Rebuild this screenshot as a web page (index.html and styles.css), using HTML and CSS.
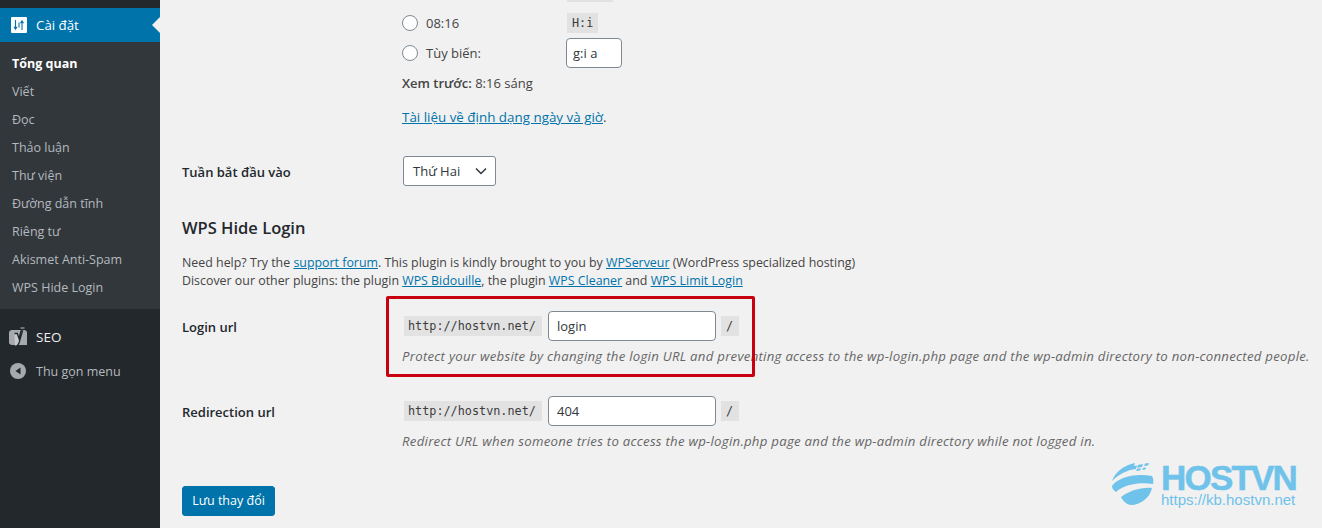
FILE: index.html
```html
<!DOCTYPE html>
<html lang="vi">
<head>
<meta charset="utf-8">
<title>Cài đặt</title>
<link rel="stylesheet" href="styles.css">
</head>
<body>
<div class="page">
  <nav class="sidebar">
    <div class="menu-current">
      <svg class="icon-settings" viewBox="0 0 16 16" width="16" height="16"><rect width="16" height="16" rx="1" fill="#fff"/><path d="M4.500 3v9M3 9.800l1.500 2.400 1.500-2.400M11 13V4M9.500 6.200L11 3.800l1.500 2.400M8 5.500v5" stroke="#0073aa" stroke-width="1.100" fill="none"/></svg>
      <span>Cài đặt</span>
    </div>
    <ul class="submenu">
      <li class="active">Tổng quan</li>
      <li>Viết</li>
      <li>Đọc</li>
      <li>Thảo luận</li>
      <li>Thư viện</li>
      <li>Đường dẫn tĩnh</li>
      <li>Riêng tư</li>
      <li>Akismet Anti-Spam</li>
      <li>WPS Hide Login</li>
    </ul>
    <div class="menu-seo">
      <svg class="icon-seo" viewBox="0 0 18 20" width="18" height="20"><path d="M3 3h12c1.500 0 3 1 3 2.500V18H3c-1.500 0-3-1-3-2.500v-10C0 4 1.500 3 3 3z" fill="#a7aaad"/><path d="M5.500 6.500h2.800l1.700 5 2-7.500h1.500L10 16c-.5 1.800-2 3.200-4 3.500" stroke="#23282d" stroke-width="1.300" fill="#c8cacc"/><path d="M11.500 1h4" stroke="#a7aaad" stroke-width="1.200"/></svg>
      <span>SEO</span>
    </div>
    <div class="menu-collapse">
      <svg class="icon-collapse" viewBox="0 0 16 16" width="16" height="16"><circle cx="8" cy="8" r="8" fill="#a7aaad"/><path d="M10.500 4.500v7L5.500 8z" fill="#23282d"/></svg>
      <span>Thu gọn menu</span>
    </div>
  </nav>

  <main class="content">
    <div class="row row-time">
      <div class="label"></div>
      <div class="field">
        <code class="fmt-clipped"></code>
        <div class="time-line">
          <label class="radio-label"><span class="radio"></span>08:16</label>
          <code class="fmt">H:i</code>
        </div>
        <div class="time-line custom-line">
          <label class="radio-label"><span class="radio"></span>Tùy biến:</label>
          <span class="input input-small">g:i a</span>
        </div>
        <p class="preview"><strong>Xem trước:</strong> 8:16 sáng</p>
        <p class="doc"><a href="#">Tài liệu về định dạng ngày và giờ</a>.</p>
      </div>
    </div>

    <div class="row row-week">
      <div class="label">Tuần bắt đầu vào</div>
      <div class="field">
        <div class="select">Thứ Hai
          <svg viewBox="0 0 12 8" width="12" height="8"><path d="M1 1.500l5 5 5-5" stroke="#32373c" stroke-width="1.500" fill="none"/></svg>
        </div>
      </div>
    </div>

    <h2 class="title">WPS Hide Login</h2>
    <p class="help">Need help? Try the <a href="#">support forum</a>. This plugin is kindly brought to you by <a href="#">WPServeur</a> (WordPress specialized hosting)<br>
    Discover our other plugins: the plugin <a href="#">WPS Bidouille</a>, the plugin <a href="#">WPS Cleaner</a> and <a href="#">WPS Limit Login</a></p>

    <div class="row row-url row-login">
      <div class="label">Login url</div>
      <div class="field">
        <div class="url-line">
          <code class="prefix">http://hostvn.net/</code>
          <span class="input input-url">login</span>
          <code class="slash">/</code>
        </div>
        <p class="desc">Protect your website by changing the login URL and preventing access to the wp-login.php page and the wp-admin directory to non-connected people.</p>
      </div>
      <div class="highlight"></div>
    </div>

    <div class="row row-url row-redirect">
      <div class="label">Redirection url</div>
      <div class="field">
        <div class="url-line">
          <code class="prefix">http://hostvn.net/</code>
          <span class="input input-url">404</span>
          <code class="slash">/</code>
        </div>
        <p class="desc">Redirect URL when someone tries to access the wp-login.php page and the wp-admin directory while not logged in.</p>
      </div>
    </div>

    <div class="submit"><span class="button">Lưu thay đổi</span></div>

    <div class="watermark">
      <svg class="globe" viewBox="0 0 44 44" width="44" height="44">
        <path d="M1 19C4 10 13 3 24 1l-1 3 3-.5-1 3.500C16 8 8 12 1 19z" fill="#6fc2ea"/>
        <path d="M27 3l5-1-1 3-5 .8zM34 1.500l4-.5-1 2.500-4 .6zM26 6.800l4-.6-.8 2.400-4 .3zM32 5.800l3-.4-.7 2.200-3 .3z" fill="#6fc2ea"/>
        <path d="M1 24C7 16 22 11 41 14c1.500 3 1.500 5 1 8-13-2-28 0-37 8-3-2-4-4-4-6z" fill="#6fc2ea"/>
        <path d="M10 35c8-6 20-10 31-9-2 10-12 17-21 17-4 0-8-4-10-8z" fill="#6fc2ea"/>
      </svg>
      <div class="wm-text">
        <div class="wm-name">HOSTVN</div>
        <div class="wm-url">https://kb.hostvn.net</div>
      </div>
    </div>
  </main>
</div>
</body>
</html>
```

FILE: styles.css
```css
* { box-sizing: border-box; }
html, body { margin: 0; padding: 0; height: 528px; overflow: hidden; }
body {
  background: #f1f1f1;
  color: #444;
  font-family: "Open Sans", "Noto Sans", sans-serif;
  font-size: 13px;
}
a { color: #0073aa; text-decoration: underline; }
p { margin: 0; }

.page { display: flex; height: 528px; }

.sidebar {
  width: 160px;
  flex: none;
  background: #23282d;
  padding-top: 8px;
  color: #fff;
}
.menu-current {
  position: relative;
  height: 34px;
  background: #0073aa;
  display: flex;
  align-items: center;
  gap: 9px;
  padding-left: 11px;
  font-size: 13.300px;
}
.menu-current::after {
  content: "";
  position: absolute;
  right: 0;
  top: 9px;
  border: 8px solid transparent;
  border-right-color: #f1f1f1;
  border-left-width: 0;
}
.submenu {
  list-style: none;
  margin: 0;
  padding: 8px 0 7px;
  background: #32373c;
  height: 267px;
}
.submenu li {
  height: 28px;
  line-height: 28px;
  padding-left: 12px;
  color: #b4b9be;
  font-size: 12.500px;
}
.submenu li.active { color: #fff; font-weight: 700; }
.menu-seo {
  display: flex;
  align-items: center;
  height: 34px;
  margin-top: 11px;
  padding-left: 9px;
  gap: 9px;
  color: #eee;
  font-size: 13.500px;
}
.menu-collapse {
  display: flex;
  align-items: center;
  height: 34px;
  padding-left: 10px;
  gap: 10px;
  color: #b4b9be;
  font-size: 12.500px;
}

.content {
  position: relative;
  flex: 1;
  padding-left: 22px;
  min-width: 0;
}
.row { display: flex; }
.label {
  width: 220px;
  flex: none;
  font-weight: 600;
  color: #23282d;
  font-size: 13px;
}
.field { flex: 1; min-width: 0; }

.row-time { height: 156px; }
.time-line { display: flex; align-items: center; height: 22px; }
.custom-line { height: 30px; margin-top: 4px; }
.radio-label { display: flex; align-items: center; width: 164px; gap: 8px; }
.radio {
  width: 16px;
  height: 16px;
  border-radius: 50%;
  background: #fff;
  border: 1px solid #7e8993;
}
code {
  font-family: "DejaVu Sans Mono", "Liberation Mono", monospace;
  background: #e2e2e2;
  color: #3c3c3c;
  font-size: 11.800px;
}
.fmt-clipped { display: block; width: 46px; height: 2px; margin: 0 0 10px 165px; }
.fmt { width: 31px; height: 20px; line-height: 20px; padding-left: 5px; margin-left: 1px; }
.input {
  display: block;
  background: #fff;
  border: 1px solid #7e8993;
  border-radius: 4px;
  color: #32373c;
  font-size: 13px;
  padding-left: 8px;
}
.input-small { width: 56px; height: 30px; line-height: 28px; padding-left: 6px; }
.preview { margin-top: 4px; line-height: 22px; }
.preview strong { font-weight: 600; }
.doc { margin-top: 12px; line-height: 22px; font-size: 13.400px; }

.row-week { height: 30px; align-items: center; }
.row-week .label { padding-top: 2px; }
.select {
  margin-left: 1px;
  width: 93px;
  height: 30px;
  background: #fff;
  border: 1px solid #7e8993;
  border-radius: 3px;
  color: #32373c;
  display: flex;
  align-items: center;
  justify-content: space-between;
  padding: 0 8px 0 9px;
}

.title {
  margin: 30px 0 0;
  font-size: 16.500px;
  font-weight: 600;
  line-height: 24px;
  color: #23282d;
}
.help { margin-top: 14px; line-height: 18px; font-size: 12.400px; color: #444; }

.row-url { position: relative; }
.row-login { margin-top: 21px; height: 85px; }
.row-redirect { height: 90px; }
.row-url .label { padding-top: 6px; line-height: 20px; }
.url-line { display: flex; align-items: center; height: 30px; }
.prefix { height: 20px; line-height: 20px; padding: 0 4px; width: 138px; margin-left: 2px; white-space: nowrap; }
.input-url { width: 168px; height: 30px; line-height: 28px; margin-left: 6px; padding-left: 8px; }
.slash { width: 18px; height: 20px; line-height: 20px; margin-left: 5px; padding-left: 5px; }
.desc { margin-top: 4px; line-height: 22px; font-style: italic; font-size: 13.200px; letter-spacing: .27px; color: #666; white-space: nowrap; }

.highlight {
  position: absolute;
  left: 204px;
  top: -15px;
  width: 369px;
  height: 81px;
  border: 3px solid #c8000f;
  border-radius: 2px;
  pointer-events: none;
}

.button {
  display: inline-block;
  width: 93px;
  height: 30px;
  line-height: 28px;
  text-align: center;
  background: #0073aa;
  border: 1px solid #0073aa;
  border-radius: 3px;
  color: #fff;
  font-size: 12.500px;
}

.watermark {
  position: absolute;
  left: 951px;
  top: 462px;
  display: flex;
  align-items: flex-start;
  gap: 6px;
  color: #6fc2ea;
}
.wm-text { padding-top: 1px; }
.wm-name {
  font-family: "Liberation Sans", sans-serif;
  font-weight: 700;
  font-size: 35px;
  line-height: 29px;
  letter-spacing: -1.800px;
  -webkit-text-stroke: .5px #6fc2ea;
}
.wm-url {
  font-family: "Liberation Sans", sans-serif;
  font-size: 15px;
  line-height: 16px;
}
```
